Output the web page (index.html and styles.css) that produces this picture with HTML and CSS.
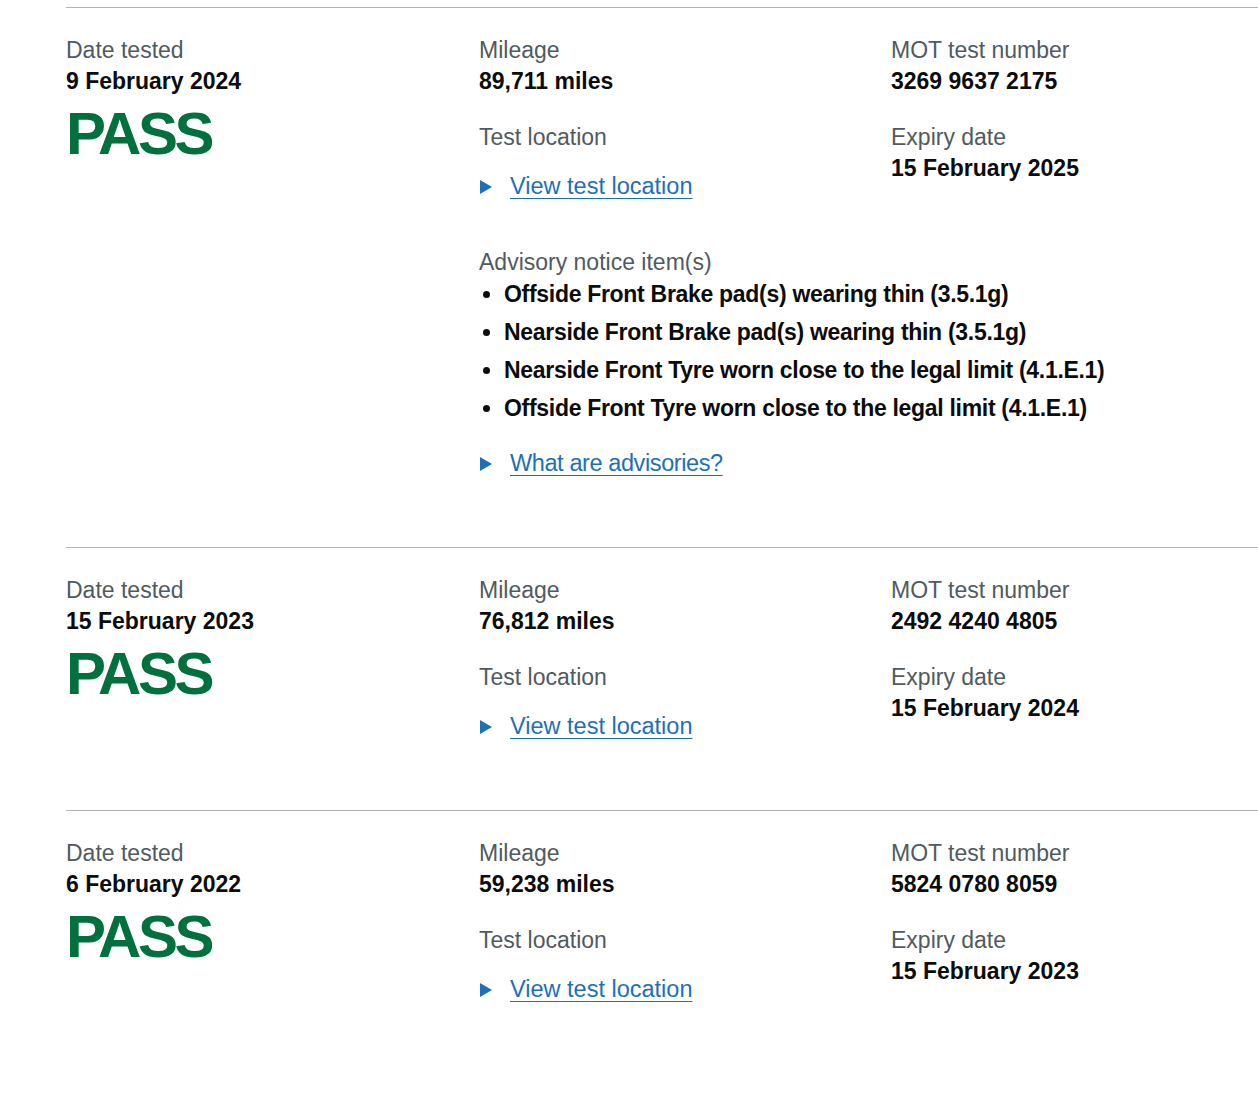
FILE: index.html
```html
<!DOCTYPE html>
<html lang="en">
<head>
<meta charset="utf-8">
<title>MOT history</title>
<link rel="stylesheet" href="styles.css">
</head>
<body>
<main class="history">

  <section class="test">
    <div class="col">
      <div class="item">
        <div class="label">Date tested</div>
        <div class="value">9 February 2024</div>
      </div>
      <div class="result">PASS</div>
    </div>
    <div class="col">
      <div class="item">
        <div class="label">Mileage</div>
        <div class="value">89,711 miles</div>
      </div>
      <div class="item">
        <div class="label">Test location</div>
        <details class="details"><summary class="summary"><span class="arrow"></span><span class="summary-text">View test location</span></summary></details>
      </div>
    </div>
    <div class="col">
      <div class="item">
        <div class="label">MOT test number</div>
        <div class="value">3269 9637 2175</div>
      </div>
      <div class="item">
        <div class="label">Expiry date</div>
        <div class="value">15 February 2025</div>
      </div>
    </div>
    <div class="advisories">
      <div class="label">Advisory notice item(s)</div>
      <ul class="defects">
        <li>Offside Front Brake pad(s) wearing thin (3.5.1g)</li>
        <li>Nearside Front Brake pad(s) wearing thin (3.5.1g)</li>
        <li>Nearside Front Tyre worn close to the legal limit (4.1.E.1)</li>
        <li>Offside Front Tyre worn close to the legal limit (4.1.E.1)</li>
      </ul>
      <details class="details details-advice"><summary class="summary"><span class="arrow"></span><span class="summary-text">What are advisories?</span></summary></details>
    </div>
  </section>

  <section class="test">
    <div class="col">
      <div class="item">
        <div class="label">Date tested</div>
        <div class="value">15 February 2023</div>
      </div>
      <div class="result">PASS</div>
    </div>
    <div class="col">
      <div class="item">
        <div class="label">Mileage</div>
        <div class="value">76,812 miles</div>
      </div>
      <div class="item">
        <div class="label">Test location</div>
        <details class="details"><summary class="summary"><span class="arrow"></span><span class="summary-text">View test location</span></summary></details>
      </div>
    </div>
    <div class="col">
      <div class="item">
        <div class="label">MOT test number</div>
        <div class="value">2492 4240 4805</div>
      </div>
      <div class="item">
        <div class="label">Expiry date</div>
        <div class="value">15 February 2024</div>
      </div>
    </div>
  </section>

  <section class="test">
    <div class="col">
      <div class="item">
        <div class="label">Date tested</div>
        <div class="value">6 February 2022</div>
      </div>
      <div class="result">PASS</div>
    </div>
    <div class="col">
      <div class="item">
        <div class="label">Mileage</div>
        <div class="value">59,238 miles</div>
      </div>
      <div class="item">
        <div class="label">Test location</div>
        <details class="details"><summary class="summary"><span class="arrow"></span><span class="summary-text">View test location</span></summary></details>
      </div>
    </div>
    <div class="col">
      <div class="item">
        <div class="label">MOT test number</div>
        <div class="value">5824 0780 8059</div>
      </div>
      <div class="item">
        <div class="label">Expiry date</div>
        <div class="value">15 February 2023</div>
      </div>
    </div>
  </section>

</main>
</body>
</html>
```
FILE: styles.css
```css
html, body {
  margin: 0;
  padding: 0;
  background: #ffffff;
  overflow: hidden;
}

body {
  font-family: "Liberation Sans", Arial, sans-serif;
  color: #0b0c0c;
  padding-top: 7px;
}

.history {
  margin-left: 66px;
  width: 1236px;
}

.test {
  border-top: 1px solid #b1b4b6;
  padding-top: 27px;
  padding-bottom: 68px;
  display: grid;
  grid-template-columns: 413px 412px 411px;
}

.col {
  display: flex;
  flex-direction: column;
  gap: 25px;
}

.label {
  font-size: 23px;
  line-height: 31px;
  color: #505a5f;
}

.value {
  font-size: 23px;
  line-height: 31px;
  font-weight: 700;
  color: #0b0c0c;
}

.result {
  margin-top: -18px;
  font-size: 60px;
  line-height: 60px;
  font-weight: 700;
  letter-spacing: -3.5px;
  color: #00703c;
}

.details {
  margin-top: 18px;
}

.summary {
  list-style: none;
  display: flex;
  align-items: center;
  font-size: 23.5px;
  line-height: 31px;
  color: #1d70b8;
  cursor: pointer;
}

.summary::-webkit-details-marker {
  display: none;
}

.arrow {
  display: block;
  width: 0;
  height: 0;
  margin-left: 1px;
  margin-right: 18px;
  border-style: solid;
  border-width: 7px 0 7px 12px;
  border-color: transparent transparent transparent #1d70b8;
}

.summary-text {
  text-decoration: underline;
  text-decoration-thickness: 1px;
  text-underline-offset: 4px;
}

.advisories {
  grid-column: 2 / 4;
  margin-top: 45px;
}

.defects {
  margin: 1px 0 0;
  padding-left: 25px;
  list-style: disc;
}

.defects li {
  font-size: 23px;
  line-height: 30px;
  font-weight: 700;
  letter-spacing: -0.3px;
  margin-bottom: 8px;
}

.details-advice {
  margin-top: 25px;
}

.details-advice .summary-text {
  letter-spacing: -0.4px;
}
```
